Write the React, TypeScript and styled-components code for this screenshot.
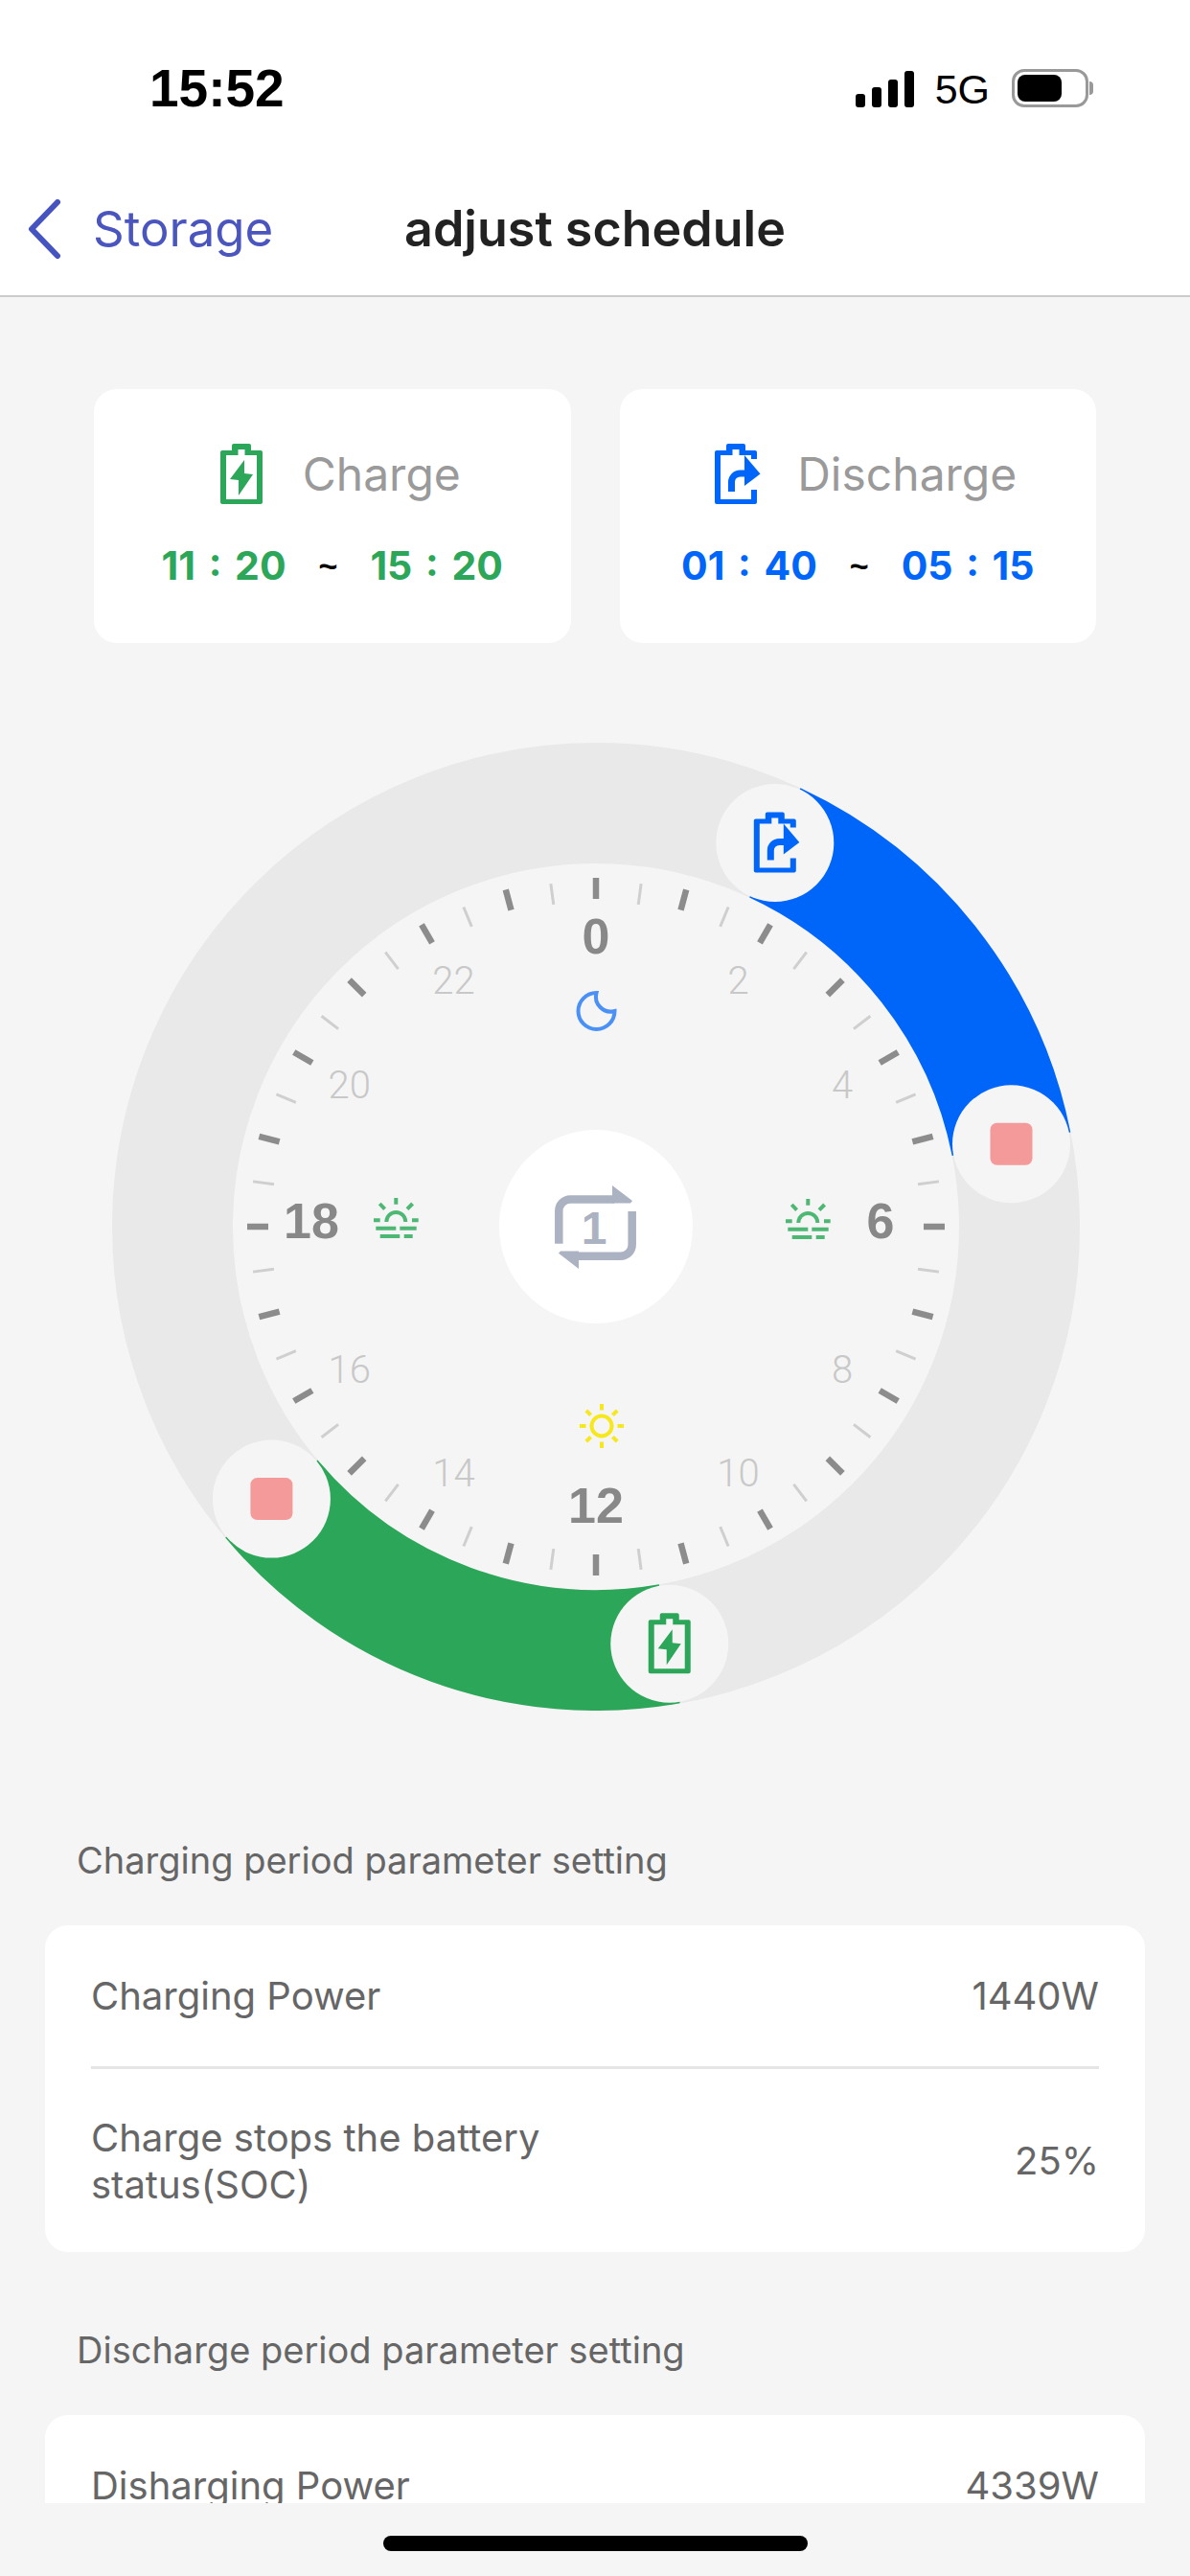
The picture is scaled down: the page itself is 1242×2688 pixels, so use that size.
import React from "react";
import styled, { createGlobalStyle } from "styled-components";

const GlobalStyle = createGlobalStyle`
  html, body { margin: 0; padding: 0; background: #f5f5f5; }
  * { box-sizing: border-box; }
  body { font-family: Inter, "Liberation Sans", sans-serif; }
`;

const GREEN = "#2ca658";
const BLUE = "#0066fa";

// dial geometry, all in the 1010 x 1010 svg box
const C = 505;
const BAND_R = 442;
const polar = (deg: number, r: number) => {
  const a = ((deg - 90) * Math.PI) / 180;
  return { x: C + r * Math.cos(a), y: C + r * Math.sin(a) };
};
const timeDeg = (h: number, m: number) => ((h + m / 60) / 24) * 360;
const arc = (from: number, to: number) => {
  const a = polar(from, BAND_R);
  const b = polar(to, BAND_R);
  return `M${a.x} ${a.y} A${BAND_R} ${BAND_R} 0 ${to - from > 180 ? 1 : 0} 1 ${b.x} ${b.y}`;
};

const ChargeIcon = ({ color }: { color: string }) => (
  <g fill={color}>
    <path
      fillRule="evenodd"
      d="M14 0h16a2 2 0 0 1 2 2v5h10a2 2 0 0 1 2 2v52a2 2 0 0 1-2 2H2a2 2 0 0 1-2-2V9a2 2 0 0 1 2-2h10V2a2 2 0 0 1 2-2zM18.5 6v6H6v46h32V12H25.5V6z"
    />
    <path d="M25 17v14l9 1-15 22V38l-9-1z" />
  </g>
);

const DischargeIcon = ({ color }: { color: string }) => (
  <g fill={color}>
    <path d="M14 0h16a2 2 0 0 1 2 2v5h10a2 2 0 0 1 2 2v7h-6v-4H25.5V6h-7v6H6v46h32V48h6v13a2 2 0 0 1-2 2H2a2 2 0 0 1-2-2V9a2 2 0 0 1 2-2h10V2a2 2 0 0 1 2-2z" />
    <path d="M31 12l16.5 19.5L31 44z" />
    <path d="M17.5 50V40a9 9 0 0 1 9-9H34" fill="none" stroke={color} strokeWidth="7" />
  </g>
);

const SunriseIcon = () => (
  <g fill="none" stroke="#4db874" strokeWidth="4">
    <path d="M23.3 0v6.7M6.3 6l5.3 5.6M40.6 6l-5.6 5.6M0 23.3h6.7M40 23.3h6.7" />
    <path d="M13.3 25a10 10 0 0 1 20 0" />
    <path d="M2.3 31.7h21M27.3 31.7h17.4M6.7 40h20.6M31.7 40h9" />
  </g>
);

const SunIcon = () => (
  <g fill="none" stroke="#f7e81e" strokeWidth="4">
    <circle cx="23" cy="23" r="10.5" />
    <path d="M23 0v6.5M23 39.5V46M0 23h6.5M39.5 23H46M6.8 6.8l4.8 4.8M34.4 34.4l4.8 4.8M39.2 6.8l-4.8 4.8M11.6 34.4l-4.8 4.8" />
  </g>
);

const MoonIcon = () => (
  <path
    d="M20.5 3A19 19 0 1 0 39.5 22 15.5 15.5 0 0 1 20.5 3z"
    fill="none"
    stroke="#4a90f5"
    strokeWidth="4"
  />
);

const RepeatOneIcon = () => (
  <g>
    <path
      d="M4.3 60.7V26.6a12 12 0 0 1 12-12H62M80.7 27v34.8a12 12 0 0 1-12 12H24"
      fill="none"
      stroke="#abb2c2"
      strokeWidth="8.5"
    />
    <path d="M60 0l21 16-2 2.5H60zM25 87L4 70.7l2-2.2h19z" fill="#abb2c2" />
    <RepeatDigit x="41" y="61">1</RepeatDigit>
  </g>
);

const hourLabels = [0, 2, 4, 6, 8, 10, 12, 14, 16, 18, 20, 22];

const Dial = () => {
  const ticks = Array.from({ length: 48 }, (_, i) => i);
  const dischargeStart = timeDeg(1, 40);
  const dischargeEnd = timeDeg(5, 15);
  const chargeStart = timeDeg(11, 20);
  const chargeEnd = timeDeg(15, 20);
  const knob = (deg: number) => polar(deg, BAND_R);

  return (
    <DialSvg viewBox="0 0 1010 1010">
      <circle cx={C} cy={C} r={BAND_R} fill="none" stroke="#e9e9e9" strokeWidth="126" />
      <path d={arc(dischargeStart, dischargeEnd)} fill="none" stroke={BLUE} strokeWidth="126" />
      <path d={arc(chargeStart, chargeEnd)} fill="none" stroke={GREEN} strokeWidth="126" />

      {ticks.map((i) => {
        const major = i % 2 === 0;
        const a = polar(i * 7.5, major ? 342 : 339);
        const b = polar(i * 7.5, major ? 364 : 361);
        return (
          <line
            key={i}
            x1={a.x}
            y1={a.y}
            x2={b.x}
            y2={b.y}
            stroke={major ? "#8c8c8c" : "#cfcfcf"}
            strokeWidth={major ? 6.5 : 3}
          />
        );
      })}

      {hourLabels.map((h) => {
        const bold = h % 6 === 0;
        const p = polar(h * 15, 297);
        return (
          <HourText key={h} x={p.x} y={p.y + (bold ? 12 : 14)} $bold={bold}>
            {h}
          </HourText>
        );
      })}

      <g transform="translate(485 258)"><MoonIcon /></g>
      <g transform="translate(488 690)"><SunIcon /></g>
      <g transform="translate(273 475)"><SunriseIcon /></g>
      <g transform="translate(703 476)"><SunriseIcon /></g>

      <circle cx={C} cy={C} r={101} fill="#fff" />
      <g transform="translate(462 462)"><RepeatOneIcon /></g>

      {[dischargeStart, chargeStart, dischargeEnd, chargeEnd].map((deg) => {
        const p = knob(deg);
        return <circle key={deg} cx={p.x} cy={p.y} r={61.5} fill="#f5f5f5" />;
      })}
      <g transform={`translate(${knob(dischargeStart).x - 22} ${knob(dischargeStart).y - 32})`}>
        <DischargeIcon color={BLUE} />
      </g>
      <g transform={`translate(${knob(chargeStart).x - 22} ${knob(chargeStart).y - 32})`}>
        <ChargeIcon color={GREEN} />
      </g>
      {[dischargeEnd, chargeEnd].map((deg) => {
        const p = knob(deg);
        return <rect key={deg} x={p.x - 22} y={p.y - 22} width="44" height="44" rx="7" fill="#f59a9a" />;
      })}
    </DialSvg>
  );
};

const PeriodCard = ({
  label,
  color,
  icon,
  from,
  to,
}: {
  label: string;
  color: string;
  icon: React.ReactNode;
  from: string;
  to: string;
}) => (
  <Card>
    <CardHead>
      <CardIcon viewBox="0 0 48 63">{icon}</CardIcon>
      <CardLabel>{label}</CardLabel>
    </CardHead>
    <TimeRow>
      <TimeText $color={color}>{from}</TimeText>
      <Tilde>~</Tilde>
      <TimeText $color={color}>{to}</TimeText>
    </TimeRow>
  </Card>
);

export default function App() {
  return (
    <Page>
      <GlobalStyle />
      <Header>
        <StatusBar>
          <Clock>15:52</Clock>
          <StatusRight>
            <Signal>
              <Bar $h={14} />
              <Bar $h={21} />
              <Bar $h={29} />
              <Bar $h={38} />
            </Signal>
            <Network>5G</Network>
            <Battery>
              <BatteryFill />
            </Battery>
            <BatteryNub />
          </StatusRight>
        </StatusBar>
        <NavBar>
          <BackLink>
            <svg width="36" height="62" viewBox="0 0 36 62">
              <path d="M32 3L5 31l27 28" fill="none" stroke="#4654c0" strokeWidth="6" strokeLinecap="round" strokeLinejoin="round" />
            </svg>
            <BackText>Storage</BackText>
          </BackLink>
          <Title>adjust schedule</Title>
        </NavBar>
      </Header>

      <Scroll>
        <CardRow>
          <PeriodCard label="Charge" color={GREEN} icon={<ChargeIcon color={GREEN} />} from="11 : 20" to="15 : 20" />
          <PeriodCard label="Discharge" color={BLUE} icon={<DischargeIcon color={BLUE} />} from="01 : 40" to="05 : 15" />
        </CardRow>
        <DialWrap>
          <Dial />
        </DialWrap>

        <SectionLabel>Charging period parameter setting</SectionLabel>
        <SettingCard>
          <SettingRow>
            <span>Charging Power</span>
            <span>1440W</span>
          </SettingRow>
          <SettingRow $tall>
            <SettingName>Charge stops the battery status(SOC)</SettingName>
            <span>25%</span>
          </SettingRow>
        </SettingCard>

        <SectionLabel $next>Discharge period parameter setting</SectionLabel>
        <SettingCard>
          <SettingRow>
            <span>Disharging Power</span>
            <span>4339W</span>
          </SettingRow>
        </SettingCard>
      </Scroll>

      <HomeArea>
        <HomeBar />
      </HomeArea>
    </Page>
  );
}

const Page = styled.div`
  width: 1242px;
  height: 2688px;
  display: flex;
  flex-direction: column;
  overflow: hidden;
  background: #f5f5f5;
`;

const Header = styled.header`
  height: 310px;
  background: #fff;
  border-bottom: 2px solid #cccccc;
  flex: none;
`;

const StatusBar = styled.div`
  height: 184px;
  padding: 70px 101px 0 156px;
  display: flex;
  justify-content: space-between;
  align-items: flex-start;
`;

const Clock = styled.div`
  font-family: "Liberation Sans", sans-serif;
  font-weight: 700;
  font-size: 55px;
  line-height: 44px;
  color: #000;
`;

const StatusRight = styled.div`
  display: flex;
  align-items: flex-end;
  height: 42px;
`;

const Signal = styled.div`
  display: flex;
  align-items: flex-end;
  gap: 7px;
  margin-right: 22px;
`;

const Bar = styled.div<{ $h: number }>`
  width: 10px;
  height: ${(p) => p.$h}px;
  background: #000;
  border-radius: 3px;
`;

const Network = styled.div`
  font-family: "Liberation Sans", sans-serif;
  font-size: 43px;
  line-height: 38px;
  color: #000;
  margin-right: 23px;
`;

const Battery = styled.div`
  width: 80px;
  height: 40px;
  border: 3px solid #999;
  border-radius: 13px;
  padding: 3px;
`;

const BatteryFill = styled.div`
  width: 46px;
  height: 100%;
  background: #000;
  border-radius: 8px;
`;

const BatteryNub = styled.div`
  width: 4px;
  height: 14px;
  background: #999;
  border-radius: 0 4px 4px 0;
  margin: 0 0 13px 1px;
`;

const NavBar = styled.nav`
  display: grid;
  grid-template-columns: 1fr auto 1fr;
  align-items: center;
  height: 108px;
  margin-top: 1px;
`;

const BackLink = styled.div`
  display: flex;
  align-items: center;
  padding-left: 28px;
  gap: 33px;
`;

const BackText = styled.span`
  font-size: 51px;
  line-height: 62px;
  color: #4a56be;
`;

const Title = styled.h1`
  margin: 0;
  font-size: 52px;
  line-height: 62px;
  font-weight: 600;
  color: #222;
`;

const Scroll = styled.main`
  height: 2302px;
  flex: none;
  overflow: hidden;
`;

const CardRow = styled.div`
  display: flex;
  gap: 51px;
  padding: 96px 98px 0;
`;

const Card = styled.div`
  width: 498px;
  height: 265px;
  background: #fff;
  border-radius: 24px;
  padding-top: 57px;
`;

const CardHead = styled.div`
  display: flex;
  justify-content: center;
  align-items: center;
  gap: 38px;
  height: 63px;
  padding-left: 17px;
`;

const CardIcon = styled.svg`
  width: 48px;
  height: 63px;
`;

const CardLabel = styled.span`
  font-size: 48px;
  line-height: 63px;
  font-weight: 400;
  color: #9a9a9a;
`;

const TimeRow = styled.div`
  display: flex;
  justify-content: center;
  align-items: center;
  gap: 34px;
  margin-top: 34px;
  height: 60px;
`;

const TimeText = styled.span<{ $color: string }>`
  font-weight: 700;
  font-size: 41px;
  word-spacing: 4px;
  color: ${(p) => p.$color};
`;

const Tilde = styled.span`
  font-family: "Liberation Sans", sans-serif;
  font-size: 34px;
  font-weight: 700;
  color: #000;
`;

const DialWrap = styled.div`
  display: flex;
  justify-content: center;
  padding: 104px 0 0 1px;
`;

const DialSvg = styled.svg`
  width: 1010px;
  height: 1010px;
  display: block;
`;

const HourText = styled.text<{ $bold: boolean }>`
  font-family: ${(p) => (p.$bold ? '"Liberation Sans"' : "Roboto")}, sans-serif;
  font-size: ${(p) => (p.$bold ? 52 : 40)}px;
  font-weight: ${(p) => (p.$bold ? 700 : 300)};
  fill: ${(p) => (p.$bold ? "#888888" : "#c8c8c8")};
  text-anchor: middle;
`;

const RepeatDigit = styled.text`
  font-family: "Liberation Sans", sans-serif;
  font-size: 48px;
  font-weight: 700;
  fill: #abb2c2;
  text-anchor: middle;
`;

const SectionLabel = styled.div<{ $next?: boolean }>`
  margin: ${(p) => (p.$next ? "78px" : "132px")} 0 0 80px;
  font-size: 38px;
  line-height: 48px;
  color: #666;
`;

const SettingCard = styled.div`
  margin: 44px 47px 0 47px;
  padding: 0 48px;
  background: #fff;
  border-radius: 24px;
`;

const SettingRow = styled.div<{ $tall?: boolean }>`
  display: flex;
  justify-content: space-between;
  align-items: center;
  height: ${(p) => (p.$tall ? 194 : 147)}px;
  font-size: 40px;
  line-height: 49px;
  color: #666;
  & + & {
    border-top: 3px solid #e5e5e5;
  }
`;

const SettingName = styled.span`
  width: 560px;
`;

const HomeArea = styled.div`
  flex: 1;
  display: flex;
  justify-content: center;
  padding-top: 34px;
`;

const HomeBar = styled.div`
  width: 443px;
  height: 16px;
  background: #000;
  border-radius: 8px;
`;
